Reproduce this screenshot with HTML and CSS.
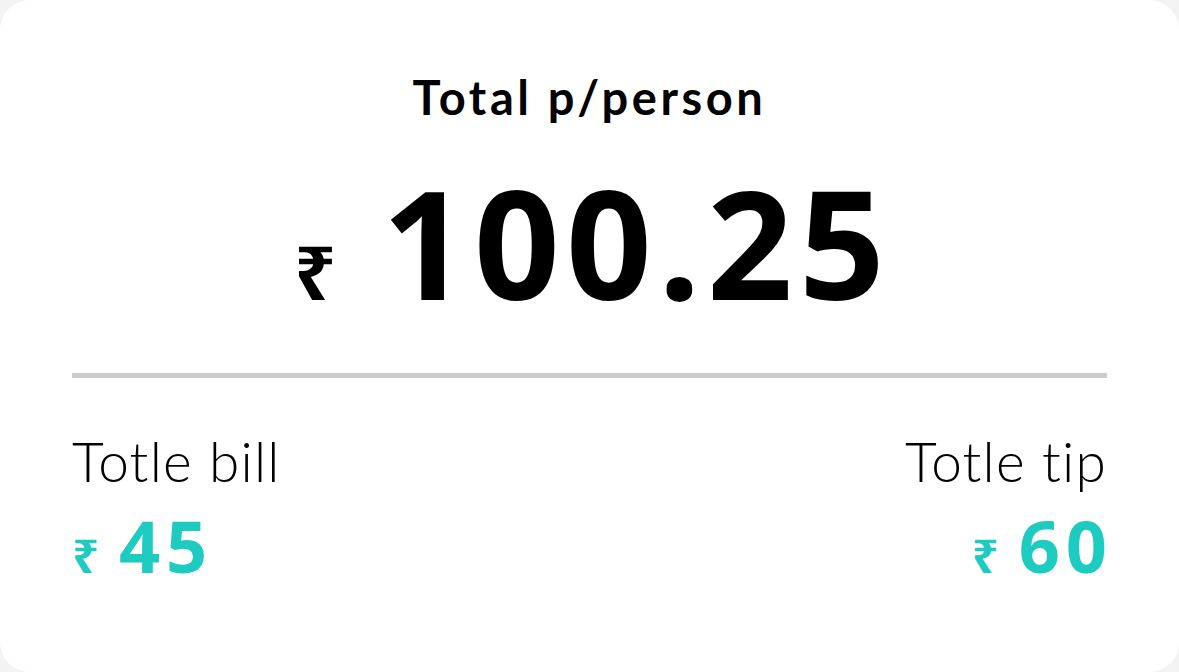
FILE: index.html
```html
<!DOCTYPE html>
<html lang="en">
<head>
<meta charset="utf-8">
<link rel="stylesheet" href="styles.css">
</head>
<body>
<div class="card">
  <div class="title">Total p/person</div>
  <div class="total"><span class="rs big-rs">₹</span><span class="total-num">100.25</span></div>
  <div class="divider"></div>
  <div class="stats">
    <div class="stat">
      <div class="label">Totle bill</div>
      <div class="value"><span class="rs small-rs">₹</span><span class="value-num">45</span></div>
    </div>
    <div class="stat right">
      <div class="label">Totle tip</div>
      <div class="value"><span class="rs small-rs">₹</span><span class="value-num">60</span></div>
    </div>
  </div>
</div>
</body>
</html>
```
FILE: styles.css
```css
html, body {
  margin: 0;
  padding: 0;
  background: #f3f3f3;
}
.card {
  box-sizing: border-box;
  width: 1179px;
  height: 672px;
  background: #ffffff;
  border-radius: 30px;
  padding: 67px 72px 0 72px;
  display: flex;
  flex-direction: column;
  font-family: "Lato", "Noto Sans", sans-serif;
  color: #000;
}
.title {
  text-align: center;
  font-family: "Lato", sans-serif;
  font-weight: 700;
  font-size: 47px;
  line-height: 60px;
  letter-spacing: 3.6px;
}
.total {
  display: flex;
  justify-content: center;
  align-items: baseline;
  margin-top: 40px;
}
.rs {
  font-family: "Noto Sans", "DejaVu Sans", sans-serif;
  font-weight: 700;
}
.big-rs {
  font-size: 73px;
  margin-right: 46px;
}
.total-num {
  font-family: "Open Sans", sans-serif;
  font-weight: 700;
  font-size: 150px;
  line-height: 150px;
  letter-spacing: 6.2px;
  margin-right: -6.2px;
}
.divider {
  height: 5px;
  background: #cccccc;
  margin-top: 52px;
}
.stats {
  display: flex;
  justify-content: space-between;
  margin-top: 53px;
}
.stat {
  display: flex;
  flex-direction: column;
}
.stat.right {
  align-items: flex-end;
}
.label {
  font-family: "Lato", sans-serif;
  font-weight: 300;
  font-size: 55px;
  line-height: 60px;
  letter-spacing: 1.2px;
}
.value {
  display: flex;
  align-items: baseline;
  color: #1ecbc1;
  margin-top: 19px;
}
.small-rs {
  font-size: 47px;
  margin-right: 20px;
}
.value-num {
  font-family: "Open Sans", sans-serif;
  font-weight: 700;
  font-size: 72px;
  line-height: 70px;
  letter-spacing: 6px;
  margin-right: -6px;
}
```
